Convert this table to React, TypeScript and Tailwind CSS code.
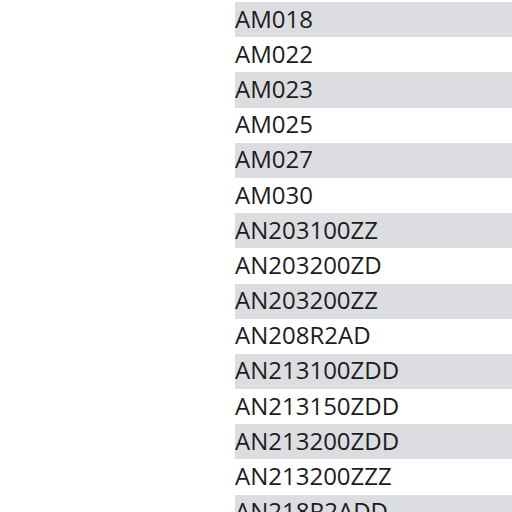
const codes = [
  'AM018',
  'AM022',
  'AM023',
  'AM025',
  'AM027',
  'AM030',
  'AN203100ZZ',
  'AN203200ZD',
  'AN203200ZZ',
  'AN208R2AD',
  'AN213100ZDD',
  'AN213150ZDD',
  'AN213200ZDD',
  'AN213200ZZZ',
  'AN218R2ADD',
];

export default function App() {
  return (
    <div className="h-[512px] w-[512px] overflow-hidden bg-white pt-[2px] pl-[235px] font-['Open_Sans',sans-serif]">
      <ul>
        {codes.map((code, i) => (
          <li
            key={code}
            className={`flex h-[35.2px] items-center pb-[2px] text-[24px] leading-none text-[#1c1c1c] ${
              i % 2 === 0 ? 'bg-[#dcdde0]' : 'bg-white'
            }`}
          >
            {code}
          </li>
        ))}
      </ul>
    </div>
  );
}
